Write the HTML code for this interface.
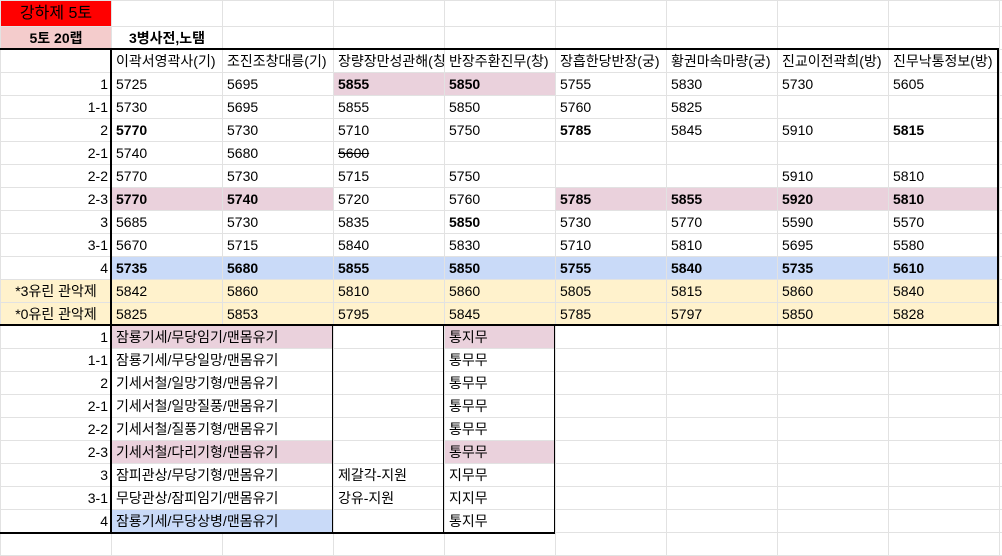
<!DOCTYPE html>
<html><head><meta charset="utf-8"><style>
*{margin:0;padding:0;box-sizing:border-box}
body{width:1002px;height:536px;overflow:hidden;background:#fff;font-family:"Liberation Sans","Noto Sans CJK KR",sans-serif;font-size:14px;color:#000;position:relative}
table{border-collapse:collapse;table-layout:fixed;position:absolute;left:0;top:0;width:1009px}
td{border:1px solid #e2e2e2;height:23px;padding:0 4px;white-space:nowrap;overflow:hidden;vertical-align:middle;line-height:20px}
td.r{text-align:right;padding-right:3px}
td.c{text-align:center}
.b{font-weight:bold}
.p{background:#ead1dc}
.bl{background:#c9daf8}
.y{background:#fff2cc}
.bk{position:absolute;background:#000}
</style></head><body>
<table>
<colgroup><col style="width:111px"><col style="width:111px"><col style="width:111px"><col style="width:111px"><col style="width:111px"><col style="width:111px"><col style="width:111px"><col style="width:111px"><col style="width:111px"><col style="width:10px"></colgroup>
<tr style="height:26px"><td class="c" style="background:#f00;font-size:16px;height:26px">강하제 5토</td><td></td><td></td><td></td><td></td><td></td><td></td><td></td><td></td><td></td></tr>
<tr><td class="c b" style="background:#f4cccc">5토 20랩</td><td class="c b">3병사전,노탬</td><td></td><td></td><td></td><td></td><td></td><td></td><td></td><td></td></tr>
<tr><td></td><td>이곽서영곽사(기)</td><td>조진조창대릉(기)</td><td>장량장만성관해(칭</td><td>반장주환진무(창)</td><td>장흡한당반장(궁)</td><td>황권마속마량(궁)</td><td>진교이전곽희(방)</td><td>진무낙통정보(방)</td><td></td></tr>
<tr><td class="r">1</td><td>5725</td><td>5695</td><td class="p b">5855</td><td class="p b">5850</td><td>5755</td><td>5830</td><td>5730</td><td>5605</td><td></td></tr>
<tr><td class="r">1-1</td><td>5730</td><td>5695</td><td>5855</td><td>5850</td><td>5760</td><td>5825</td><td></td><td></td><td></td></tr>
<tr><td class="r">2</td><td class="b">5770</td><td>5730</td><td>5710</td><td>5750</td><td class="b">5785</td><td>5845</td><td>5910</td><td class="b">5815</td><td></td></tr>
<tr><td class="r">2-1</td><td>5740</td><td>5680</td><td><s>5600</s></td><td></td><td></td><td></td><td></td><td></td><td></td></tr>
<tr><td class="r">2-2</td><td>5770</td><td>5730</td><td>5715</td><td>5750</td><td></td><td></td><td>5910</td><td>5810</td><td></td></tr>
<tr><td class="r">2-3</td><td class="p b">5770</td><td class="p b">5740</td><td>5720</td><td>5760</td><td class="p b">5785</td><td class="p b">5855</td><td class="p b">5920</td><td class="p b">5810</td><td></td></tr>
<tr><td class="r">3</td><td>5685</td><td>5730</td><td>5835</td><td class="b">5850</td><td>5730</td><td>5770</td><td>5590</td><td>5570</td><td></td></tr>
<tr><td class="r">3-1</td><td>5670</td><td>5715</td><td>5840</td><td>5830</td><td>5710</td><td>5810</td><td>5695</td><td>5580</td><td></td></tr>
<tr><td class="r">4</td><td class="bl b">5735</td><td class="bl b">5680</td><td class="bl b">5855</td><td class="bl b">5850</td><td class="bl b">5755</td><td class="bl b">5840</td><td class="bl b">5735</td><td class="bl b">5610</td><td></td></tr>
<tr><td class="c y">*3유린 관악제</td><td class="y">5842</td><td class="y">5860</td><td class="y">5810</td><td class="y">5860</td><td class="y">5805</td><td class="y">5815</td><td class="y">5860</td><td class="y">5840</td><td></td></tr>
<tr><td class="c y">*0유린 관악제</td><td class="y">5825</td><td class="y">5853</td><td class="y">5795</td><td class="y">5845</td><td class="y">5785</td><td class="y">5797</td><td class="y">5850</td><td class="y">5828</td><td></td></tr>
<tr><td class="r">1</td><td colspan="2" class="p">잠룡기세/무당임기/맨몸유기</td><td></td><td class="p">통지무</td><td></td><td></td><td></td><td></td><td></td></tr>
<tr><td class="r">1-1</td><td colspan="2">잠룡기세/무당일망/맨몸유기</td><td></td><td>통무무</td><td></td><td></td><td></td><td></td><td></td></tr>
<tr><td class="r">2</td><td colspan="2">기세서철/일망기형/맨몸유기</td><td></td><td>통무무</td><td></td><td></td><td></td><td></td><td></td></tr>
<tr><td class="r">2-1</td><td colspan="2">기세서철/일망질풍/맨몸유기</td><td></td><td>통무무</td><td></td><td></td><td></td><td></td><td></td></tr>
<tr><td class="r">2-2</td><td colspan="2">기세서철/질풍기형/맨몸유기</td><td></td><td>통무무</td><td></td><td></td><td></td><td></td><td></td></tr>
<tr><td class="r">2-3</td><td colspan="2" class="p">기세서철/다리기형/맨몸유기</td><td></td><td class="p">통무무</td><td></td><td></td><td></td><td></td><td></td></tr>
<tr><td class="r">3</td><td colspan="2">잠피관상/무당기형/맨몸유기</td><td>제갈각-지원</td><td>지무무</td><td></td><td></td><td></td><td></td><td></td></tr>
<tr><td class="r">3-1</td><td colspan="2">무당관상/잠피임기/맨몸유기</td><td>강유-지원</td><td>지지무</td><td></td><td></td><td></td><td></td><td></td></tr>
<tr><td class="r">4</td><td colspan="2" class="bl">잠룡기세/무당상병/맨몸유기</td><td></td><td>통지무</td><td></td><td></td><td></td><td></td><td></td></tr>
<tr><td></td><td></td><td></td><td></td><td></td><td></td><td></td><td></td><td></td><td></td></tr>
</table>
<div class="bk" style="left:0;top:48px;width:999px;height:2px"></div>
<div class="bk" style="left:110px;top:48px;width:2px;height:486px"></div>
<div class="bk" style="left:997px;top:48px;width:2px;height:278px"></div>
<div class="bk" style="left:0;top:324px;width:999px;height:2px"></div>
<div class="bk" style="left:332px;top:325px;width:1px;height:209px"></div>
<div class="bk" style="left:443px;top:325px;width:1px;height:209px"></div>
<div class="bk" style="left:554px;top:325px;width:1px;height:209px"></div>
<div class="bk" style="left:0;top:532px;width:555px;height:2px"></div>
</body></html>
